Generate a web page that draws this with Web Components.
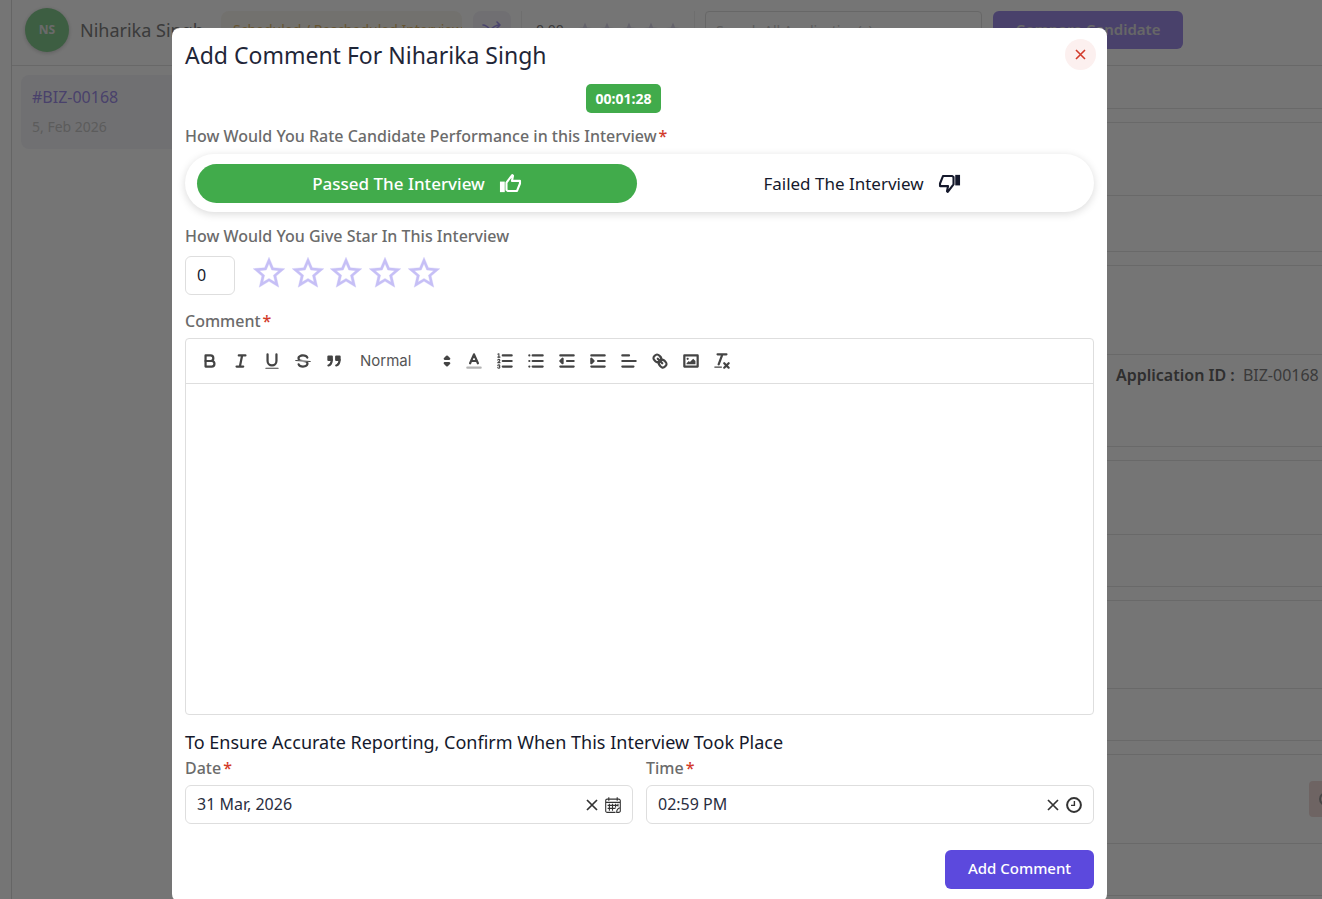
<!DOCTYPE html>
<html lang="en">
<head>
<meta charset="utf-8">
<meta name="viewport" content="width=device-width, initial-scale=1">
<title>Add Comment</title>
<style>
  :root {
    --ink: #15192c;
    --muted: #6b6b6b;
    --line: #dedede;
    --accent: #5c49dd;
    --green: #41ab4b;
    --red: #d23b2b;
  }
  html, body { height: 100%; margin: 0; overflow: hidden; }
  body {
    background: #fff;
    color: var(--ink);
    font: 16px/20px "Noto Sans", "Open Sans", sans-serif;
  }
</style>
</head>
<body>
<candidate-page></candidate-page>
<modal-layer>
  <comment-form></comment-form>
</modal-layer>

<script>
const RESET = `
  *, *::before, *::after { box-sizing: border-box; }
  :host { display: block; box-sizing: border-box; }
  button, input, select { font: inherit; color: inherit; margin: 0; }
  button { border: 0; padding: 0; background: none; cursor: pointer; }
  svg { display: block; flex: none; }
`;

function define(name, render) {
  customElements.define(name, class extends HTMLElement {
    constructor() {
      super();
      this.attachShadow({ mode: "open" });
    }
    connectedCallback() {
      const t = document.createElement("template");
      const html = typeof render === "function" ? render(this) : render;
      t.innerHTML = html.replace("<style>", "<style>" + RESET);
      this.shadowRoot.replaceChildren(t.content.cloneNode(true));
    }
  });
}

/* ---------- page behind the dialog ---------- */

define("user-avatar", `
  <style>
    :host {
      display: grid; place-items: center; width: 44px; height: 44px; flex: none;
      border-radius: 50%; background: #86cc90; color: #e8e8e8;
      font-size: 12px; font-weight: 700; box-shadow: 0 1px 4px #0003;
    }
  </style>
  <slot></slot>`);

define("page-header", `
  <style>
    :host { border-bottom: 1px solid #e2e2e2; }
    header { display: flex; align-items: center; height: 65px; padding: 0 13px 5px; }
    h1 { margin: 0 0 0 11px; width: 130px; flex: none; font-size: 18px; line-height: 24px; font-weight: 400; color: #808080; white-space: nowrap; }
    .stage { margin-left: 11px; width: 241px; height: 38px; padding: 0 12px; border-radius: 8px; background: #f9f6ef; color: #dfba6c; font-size: 14px; line-height: 38px; white-space: nowrap; overflow: hidden; flex: none; }
    .swap { margin: 0 10px 0 11px; width: 38px; height: 38px; border-radius: 8px; background: #f3f2f9; color: #a294ec; display: grid; place-items: center; flex: none; }
    .score { display: flex; align-items: center; gap: 12px; width: 174px; flex: none; height: 38px; padding: 0 14px; border: solid #f0f0f0; border-width: 0 1px; font-size: 14px; color: #808080; }
    .stars { display: flex; gap: 4px; color: #dbd8ea; }
    input { margin-left: 10px; width: 277px; height: 38px; border: 1px solid #e0e0e0; border-radius: 4px; padding: 0 10px; background: none; font-size: 14px; }
    input::placeholder { color: #c8c8c8; opacity: 1; }
    .compare { margin-left: 11px; width: 190px; height: 38px; padding-bottom: 2px; border-radius: 6px; background: #9f8eea; color: #e0e0e0; font-size: 15px; font-weight: 600; flex: none; }
  </style>
  <header>
    <user-avatar>NS</user-avatar>
    <h1>Niharika Singh</h1>
    <span class="stage">Scheduled / Rescheduled Interview</span>
    <button class="swap" aria-label="Move stage">
      <svg width="20" height="20" viewBox="0 0 20 20" fill="none" stroke="currentColor" stroke-width="1.6" stroke-linecap="round" stroke-linejoin="round"><path d="M1 5c7 0 7 10 17 10M1 15C8 15 8 5 18 5M15 2l3 3-3 3M15 12l3 3-3 3"/></svg>
    </button>
    <div class="score"><span>0.00</span><span class="stars">${
      `<svg width="18" height="18" viewBox="0 0 24 24" fill="currentColor"><path d="M12 17.27 18.18 21l-1.64-7.03L22 9.24l-7.19-.61L12 2 9.19 8.63 2 9.24l5.46 4.73L5.82 21z"/></svg>`.repeat(5)
    }</span></div>
    <input type="search" aria-label="Search applications" placeholder="Search All Application(s)">
    <button class="compare">Compare Candidate</button>
  </header>`);

define("application-link", `
  <style>
    :host { background: #f5f5f9; border-radius: 8px; padding: 12px 11px; height: 74px; }
    a { display: block; color: #9f8eea; text-decoration: none; }
    time { display: block; margin-top: 10px; font-size: 14px; color: #c8c8c8; }
  </style>
  <a href="#application"><slot></slot></a>
  <time datetime="2026-02-05">5, Feb 2026</time>`);

define("info-card", host => `
  <style>
    :host { border: 1px solid #e4e4e4; border-radius: 6px; }
    .head { height: ${host.getAttribute("head")}px; border-bottom: 1px solid #e4e4e4; display: flex; align-items: center; justify-content: flex-end; }
    .body { height: ${host.getAttribute("body")}px; padding-top: 10px; }
  </style>
  <div class="head"><slot name="head"></slot></div>
  <div class="body"><slot></slot></div>`);

define("candidate-page", `
  <style>
    :host { height: 100vh; overflow: hidden; padding-left: 11px; }
    .shell { border-left: 1px solid #dcdcdc; min-height: 100%; }
    .columns { display: grid; grid-template-columns: 240px minmax(0, 1fr); }
    aside { padding: 9px; }
    main { display: flex; flex-direction: column; gap: 13px; margin-right: -40px; border-left: 1px solid #e4e4e4; }
    .strip { height: 43px; border-bottom: 1px solid #e4e4e4; }
    .facts { display: grid; grid-template-columns: minmax(0, 1fr) 245px; white-space: nowrap; color: #808080; }
    .facts p { margin: 0; grid-column: 2; }
    b { color: #666; font-weight: 600; margin-right: 4px; }
    .drop { display: grid; place-items: center start; width: 52px; height: 36px; padding-left: 9px; border: 0; border-radius: 4px; background: #efdbd8; color: #999; }
  </style>
  <div class="shell">
    <page-header></page-header>
    <div class="columns">
      <aside><application-link>#BIZ-00168</application-link></aside>
      <main>
        <div class="strip"></div>
        <info-card head="73" body="55"></info-card>
        <info-card head="89" body="91">
          <div class="facts"><p><b>Application ID :</b> BIZ-00168</p></div>
        </info-card>
        <info-card head="74" body="51"></info-card>
        <info-card head="88" body="51"></info-card>
        <info-card head="89" body="51">
          <button slot="head" class="drop" aria-label="Reject">
            <svg width="16" height="16" viewBox="0 0 16 16" fill="none" stroke="currentColor" stroke-width="2"><circle cx="8" cy="8" r="6"/></svg>
          </button>
        </info-card>
      </main>
    </div>
  </div>`);

/* ---------- dialog ---------- */

define("modal-layer", `
  <style>
    :host { position: fixed; inset: 0; overflow: auto; scrollbar-width: none; background: rgba(0, 0, 0, .54); padding: 28px 43px 0 0; }
    section { max-width: 935px; margin: 0 auto; background: #fff; border-radius: 8px; }
  </style>
  <section role="dialog" aria-modal="true" aria-label="Add Comment For Niharika Singh"><slot></slot></section>`);

const THUMB = `<rect x="1" y="10" width="5" height="11" fill="currentColor"/><path d="M7.8,11L13.8,3.2L14.6,4L13.5,9.3H21.9V12L18.8,19.8H9.2L7.8,18.6Z" fill="none" stroke="currentColor" stroke-width="2.2" stroke-linejoin="round"/>`;

define("outcome-switch", `
  <style>
    fieldset { margin: 0; border: 0; min-width: 0; display: grid; grid-template-columns: 1fr 1fr; gap: 5px; padding: 10px 12px 9px; border-radius: 29px; box-shadow: 0 2px 8px rgba(0, 0, 0, .15); font-size: 17px; }
    label { display: flex; align-items: center; justify-content: center; gap: 14px; height: 39px; border-radius: 20px; cursor: pointer; white-space: nowrap; }
    label:has(:checked) { background: var(--green); color: #fff; font-weight: 500; }
    input { position: absolute; opacity: 0; pointer-events: none; }
  </style>
  <fieldset aria-label="Interview result">
    <label><input type="radio" name="outcome" checked>Passed The Interview
      <svg width="23" height="23" viewBox="0 0 24 24">${THUMB}</svg>
    </label>
    <label><input type="radio" name="outcome">Failed The Interview
      <svg width="23" height="23" viewBox="0 0 24 24"><g transform="rotate(180 12 12)">${THUMB}</g></svg>
    </label>
  </fieldset>`);

define("star-rating", `
  <style>
    label { display: block; color: var(--muted); font-weight: 500; margin-bottom: 10px; }
    .row { display: flex; gap: 15px; }
    input { width: 50px; height: 39px; border: 1px solid var(--line); border-radius: 6px; padding: 0 11px 2px; background: #fff; outline: 0; }
    .stars { display: grid; grid-template-columns: repeat(5, 1fr); width: 193px; height: 34px; color: #c6bff6; }
    button { display: flex; align-items: center; justify-content: center; height: 34px; }
  </style>
  <label for="score">How Would You Give Star In This Interview</label>
  <div class="row">
    <input id="score" type="text" inputmode="numeric" value="0">
    <div class="stars">${[1, 2, 3, 4, 5].map(n => `<button aria-label="${n} star">
      <svg width="38" height="38" viewBox="0 0 24 24" fill="currentColor" stroke="currentColor" stroke-width=".2"><path d="M22 9.24l-7.19-.62L12 2 9.19 8.63 2 9.24l5.46 4.73L5.82 21 12 17.27 18.18 21l-1.63-7.03L22 9.24zM12 15.4l-3.76 2.27 1-4.28-3.32-2.88 4.38-.38L12 6.1l1.71 4.04 4.38.38-3.32 2.88 1 4.28L12 15.4z"/></svg></button>`).join("")}</div>
  </div>`);

const TOOLS_A = {
  Bold: `<path d="M5,4H9.5a2.5,2.5,0,0,1,0,5H5Z"/><path d="M5,9h5.5a2.5,2.5,0,0,1,0,5H5Z"/>`,
  Italic: `<path d="M7,4h6M5,14h6M8,14L10,4"/>`,
  Underline: `<path d="M5,3V9a4,4,0,0,0,8,0V3"/><rect class="f" x="3" y="15" width="12" height="1" rx=".5"/>`,
  Strike: `<path class="t" d="M2.5,8.5L15.5,9.5"/><path class="f" d="M9.007,8C6.542,7.791,6,7.519,6,6.5,6,5.792,7.283,5,9,5c1.571,0,2.765.679,2.969,1.309a1,1,0,0,0,1.9-.617C13.356,4.106,11.354,3,9,3,6.2,3,4,4.538,4,6.5a3.2,3.2,0,0,0,.5,1.843Z"/><path class="f" d="M8.984,10C11.457,10.208,12,10.479,12,11.5c0,0.708-1.283,1.5-3,1.5-1.571,0-2.765-.679-2.969-1.309a1,1,0,1,0-1.9.617C4.644,13.894,6.646,15,9,15c2.8,0,5-1.538,5-3.5a3.2,3.2,0,0,0-.5-1.843Z"/>`,
  Quote: `<g class="b"><rect x="4" y="5" width="3" height="3"/><rect x="11" y="5" width="3" height="3"/><path d="M7,8c0,4.031-3,5-3,5"/><path d="M14,8c0,4.031-3,5-3,5"/></g>`
};
const TOOLS_B = {
  "Text colour": `<path d="M3,15H15" opacity=".4"/><path d="M5.5,11L9,3L12.5,11M6.38,9H11.63"/>`,
  "Ordered list": `<path d="M7,4H15M7,9H15M7,14H15"/><path class="t" d="M2.5,5.5H4.5"/><path class="f" d="M3.5,6A0.5,0.5,0,0,1,3,5.5V3.085l-0.276.138A0.5,0.5,0,0,1,2.053,3c-0.124-.247-0.023-0.324.224-0.447l1-.5A0.5,0.5,0,0,1,4,2.5v3A0.5,0.5,0,0,1,3.5,6Z"/><path class="t" d="M4.5,10.5h-2c0-.234,1.85-1.076,1.85-2.234A0.959,0.959,0,0,0,2.5,8.156"/><path class="t" d="M2.5,14.846a0.959,0.959,0,0,0,1.85-.109A0.7,0.7,0,0,0,3.75,14a0.688,0.688,0,0,0,.6-0.736,0.959,0.959,0,0,0-1.85-.109"/>`,
  "Bullet list": `<path d="M6,4H15M6,9H15M6,14H15M3,4H3M3,9H3M3,14H3"/>`,
  Outdent: `<path d="M3,14H15M3,4H15M9,9H15"/><path class="b" d="M5,7V11L3,9Z"/>`,
  Indent: `<path d="M3,14H15M3,4H15M9,9H15"/><path class="b" d="M3,7V11L5,9Z"/>`,
  Align: `<path d="M3,9H15M3,14H13M3,4H9"/>`,
  Link: `<path d="M7,7L11,11"/><path d="M8.9,4.577a3.476,3.476,0,0,1,.36,4.679A3.476,3.476,0,0,1,4.577,8.9C3.185,7.5,2.035,6.4,4.217,4.217S7.5,3.185,8.9,4.577Z"/><path d="M13.423,9.1a3.476,3.476,0,0,0-4.679-.36,3.476,3.476,0,0,0,.36,4.679c1.392,1.392,2.5,2.542,4.679.36S14.815,10.5,13.423,9.1Z"/>`,
  Image: `<rect x="3" y="4" width="12" height="10"/><circle class="f" cx="6" cy="7" r="1"/><path class="f" d="M5,12V11L7,9L8,10L11,7L13,9V12Z"/>`,
  "Clear format": `<path d="M5,3H13M6,12L9.35,3M11,11L15,15M15,11L11,15"/><rect class="f" x="2" y="14" width="7" height="1" rx=".5"/>`
};
const toolButtons = set => Object.entries(set).map(([name, art]) =>
  `<button aria-label="${name}"><svg width="20" height="20" viewBox="0 0 18 18">${art}</svg></button>`).join("");

define("rich-editor", `
  <style>
    :host { border: 1px solid var(--line); border-radius: 4px; }
    .bar { display: flex; align-items: center; height: 45px; padding: 0 8px 1px; border-bottom: 1px solid var(--line); color: #444; }
    button { width: 31px; height: 30px; display: grid; place-items: center; }
    button svg, .pick svg { fill: none; stroke: currentColor; stroke-width: 2; stroke-linecap: round; stroke-linejoin: round; }
    .f { fill: currentColor; stroke: none; }
    .t { stroke-width: 1; }
    .b { fill: currentColor; }
    .pick { display: grid; grid-template-columns: 1fr 20px; align-items: center; width: 109px; padding: 0 1px 0 11px; }
    .pick > * { grid-row: 1; }
    select { grid-column: 1 / 3; appearance: none; border: 0; padding: 0; background: none; outline: 0; width: 100%; font-family: Inter, sans-serif; font-size: 15px; color: #555; }
    .pick svg { grid-column: 2; pointer-events: none; }
    .pick path { fill: currentColor; }
    .text { height: 330px; padding: 12px 15px; outline: 0; }
  </style>
  <div class="bar" role="toolbar" aria-label="Formatting">
    ${toolButtons(TOOLS_A)}
    <span class="pick">
      <select aria-label="Text style"><option>Normal</option><option>Heading 1</option><option>Heading 2</option></select>
      <svg width="20" height="20" viewBox="0 0 18 18"><path d="M7,11L9,13L11,11ZM7,7L9,5L11,7Z"/></svg>
    </span>
    ${toolButtons(TOOLS_B)}
  </div>
  <div class="text" contenteditable="true" role="textbox" aria-multiline="true" aria-label="Comment"></div>`);

const PICKER_ICONS = {
  date: `<svg width="16" height="16" viewBox="0 0 16 16" fill="none" stroke="currentColor" stroke-width="1.1"><path d="M10.5 15.4H2.2A1.5 1.5 0 0 1 .7 13.9V3.6a1.5 1.5 0 0 1 1.5-1.5h11.6a1.5 1.5 0 0 1 1.5 1.5V10.8M.7 5.4H15.3M3.8 .2V3.8M12.2 .2V3.8M2.6 8.4H13.2M2.6 11.4H10.5M4.4 6.8V13.8M7.5 6.8V13.8M10.6 6.8V10.6M15.3 10.8a4 4 0 0 0-3.6 4.6H13.8a1.5 1.5 0 0 0 1.5-1.5ZM13 6.8V9.6"/></svg>`,
  time: `<svg width="16" height="16" viewBox="0 0 16 16" fill="none" stroke="currentColor" stroke-width="2"><circle cx="8" cy="8" r="6.9"/><path d="M8.4 4V8.4H5" stroke-width="1.4"/></svg>`
};

define("picker-field", host => `
  <style>
    label { display: block; margin-bottom: 7px; color: var(--muted); font-weight: 500; }
    i { color: var(--red); font-style: normal; margin-left: 2px; }
    .box { display: flex; align-items: center; gap: 6px; height: 39px; padding: 0 11px; border: 1px solid var(--line); border-radius: 6px; color: #333; }
    input { flex: 1; min-width: 0; border: 0; padding: 0 0 1px; background: none; outline: 0; color: #2a2e3f; }
  </style>
  <label for="field">${host.getAttribute("label")}<i>*</i></label>
  <div class="box">
    <input id="field" type="text" value="${host.getAttribute("value")}">
    <button aria-label="Clear"><svg width="14" height="14" viewBox="0 0 14 14" fill="none" stroke="currentColor" stroke-width="1.7"><path d="M2 2l10 10M12 2L2 12"/></svg></button>
    <button aria-label="Open picker">${PICKER_ICONS[host.getAttribute("kind")]}</button>
  </div>`);

define("comment-form", `
  <style>
    :host { padding: 11px 13px 13px; }
    header { display: flex; align-items: center; justify-content: space-between; margin-right: -2px; }
    h2 { margin: 0; font-size: 23px; line-height: 30px; font-weight: 400; color: #1f2638; }
    .close { display: grid; place-items: center; width: 31px; height: 31px; border-radius: 50%; background: #fcf0ef; color: var(--red); }
    .clock { padding-right: 32px; }
    .timer { display: block; width: 75px; margin: 14px auto 13px; border-radius: 5px; background: var(--green); color: #fff; text-align: center; font-size: 14px; line-height: 29px; font-weight: 700; }
    .label { margin: 0; color: var(--muted); font-weight: 500; }
    i { color: var(--red); font-style: normal; margin-left: 2px; }
    outcome-switch { margin-top: 8px; }
    star-rating { margin: 14px 0 16px; }
    rich-editor { margin-top: 7px; }
    h3 { margin: 16px 0 5px; font-size: 18px; line-height: 22px; font-weight: 400; }
    .when { display: grid; grid-template-columns: 1fr 1fr; gap: 13px; }
    footer { display: flex; justify-content: flex-end; margin-top: 26px; }
    .submit { width: 149px; height: 39px; padding-bottom: 3px; border-radius: 6px; background: var(--accent); color: #fff; font-size: 15px; font-weight: 500; }
  </style>
  <header>
    <h2>Add Comment For Niharika Singh</h2>
    <button class="close" aria-label="Close"><svg width="11" height="11" viewBox="0 0 11 11" fill="none" stroke="currentColor" stroke-width="1.6"><path d="M1 1l9 9M10 1L1 10"/></svg></button>
  </header>
  <div class="clock"><span class="timer" role="timer">00:01:28</span></div>
  <p class="label">How Would You Rate Candidate Performance in this Interview<i>*</i></p>
  <outcome-switch></outcome-switch>
  <star-rating></star-rating>
  <p class="label">Comment<i>*</i></p>
  <rich-editor></rich-editor>
  <h3>To Ensure Accurate Reporting, Confirm When This Interview Took Place</h3>
  <div class="when">
    <picker-field label="Date" value="31 Mar, 2026" kind="date"></picker-field>
    <picker-field label="Time" value="02:59 PM" kind="time"></picker-field>
  </div>
  <footer><button class="submit">Add Comment</button></footer>`);
</script>
</body>
</html>
